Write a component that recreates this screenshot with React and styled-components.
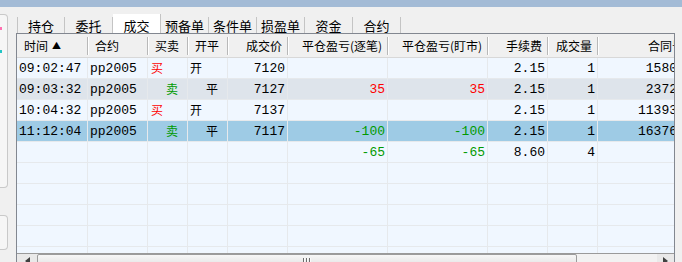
import React from "react";
import styled, { createGlobalStyle } from "styled-components";

const GlobalStyle = createGlobalStyle`
  html, body {
    margin: 0;
    padding: 0;
    background: #f0f0f0;
    overflow: hidden;
  }
  body {
    font-family: "Noto Sans CJK SC", sans-serif;
  }
`;

const Window = styled.div`
  width: 682px;
  height: 262px;
  overflow: hidden;
  display: flex;
  flex-direction: column;
  background: #f0f0f0;
`;

const TitleBand = styled.div`
  height: 7px;
  flex: none;
  background: #a3bbd6;
`;

const Body = styled.div`
  display: flex;
  flex: 1;
  min-height: 0;
`;

const SidePanel = styled.div`
  width: 8px;
  flex: none;
  padding-top: 7px;
  display: flex;
  flex-direction: column;
  gap: 27px;
`;

const SideBox = styled.div`
  height: ${(p) => p.$h}px;
  box-sizing: border-box;
  border: 1px solid #c9c9c9;
  border-left: none;
  border-radius: 0 4px 4px 0;
  background: #f6f6f6;
  display: flex;
  flex-direction: column;
  gap: 20px;
  padding-top: 12px;
`;

const Mark = styled.span`
  width: 2px;
  height: 3px;
  background: ${(p) => p.$color};
`;

const Main = styled.div`
  margin-left: 8px;
  width: 659px;
  flex: none;
  display: flex;
  flex-direction: column;
  padding-top: 7px;
`;

const TabStrip = styled.div`
  display: flex;
  align-items: flex-end;
  height: 19px;
  padding-left: 1px;
`;

const Tab = styled.div`
  width: 48px;
  height: ${(p) => (p.$active ? 19 : 16)}px;
  box-sizing: border-box;
  border-right: 1px solid #c4c4c4;
  border-left: ${(p) => (p.$first ? "1px solid #c4c4c4" : "none")};
  background: ${(p) => (p.$active ? "#ffffff" : "#f0f0f0")};
  font-size: 13px;
  line-height: 1;
  color: #000;
  display: flex;
  align-items: center;
  justify-content: center;
  padding-top: ${(p) => (p.$active ? 3 : 1)}px;
`;

const Frame = styled.div`
  border: 1px solid #828790;
  height: 240px;
  flex: none;
  display: flex;
  flex-direction: column;
  overflow: hidden;
  background: #f0f7ff;
`;

const Grid = styled.div`
  height: 219px;
  flex: none;
  overflow: hidden;
`;

const HeaderRow = styled.div`
  display: flex;
  height: 24px;
  box-sizing: border-box;
  border-bottom: 1px solid #d8d8d8;
  background: #f0f0f0;
`;

const HeaderCell = styled.div`
  width: ${(p) => p.$w}px;
  flex: none;
  box-sizing: border-box;
  position: relative;
  display: flex;
  align-items: center;
  justify-content: ${(p) => (p.$align === "right" ? "flex-end" : "flex-start")};
  padding: ${(p) => (p.$align === "right" ? `0 ${p.$pad ?? 6}px 0 0` : "0 0 0 7px")};
  font-size: 12px;
  line-height: 1;
  color: #000;
  white-space: nowrap;

  &::after {
    content: "";
    position: absolute;
    right: 0;
    top: 3px;
    bottom: 2px;
    width: 1px;
    background: #b8b8b8;
    box-shadow: 1px 0 0 #ffffff;
  }
`;

const SortArrow = styled.span`
  font-size: 9px;
  margin-left: 4px;
`;

const Row = styled.div`
  display: flex;
  height: 21px;
  box-sizing: border-box;
  border-bottom: 1px solid #e6e9ec;
  background: ${(p) =>
    p.$tone === "selected" ? "#9ecbe5" : p.$tone === "alt" ? "#dee4eb" : "#f0f7ff"};
`;

const Cell = styled.div`
  width: ${(p) => p.$w}px;
  flex: none;
  box-sizing: border-box;
  border-right: 1px solid #e6e9ec;
  display: flex;
  align-items: center;
  justify-content: ${(p) => (p.$align === "right" ? "flex-end" : "flex-start")};
  padding: ${(p) => (p.$align === "right" ? `0 ${p.$pad ?? 2}px 0 0` : `0 0 0 ${p.$indent || 2}px`)};
  font-family: "Liberation Mono", "Noto Sans CJK SC", monospace;
  font-size: 13px;
  line-height: 1;
  color: ${(p) => p.$color || "#000"};
  white-space: nowrap;
`;

const Cjk = styled.span`
  font-family: "Noto Sans CJK SC", sans-serif;
  font-size: 12px;
`;

const ScrollBar = styled.div`
  height: 17px;
  flex: none;
  display: flex;
  border-top: 1px solid #9a9a9a;
  background: #e9e9e9;
`;

const ArrowButton = styled.div`
  width: ${(p) => p.$w}px;
  flex: none;
  display: flex;
  align-items: flex-start;
  justify-content: center;
  padding-top: 3px;
  box-sizing: border-box;
`;

const Thumb = styled.div`
  width: 540px;
  flex: none;
  box-sizing: border-box;
  border: 1px solid #9c9c9c;
  border-radius: 2px;
  background: linear-gradient(#f7f7f7, #dcdcdc);
  display: flex;
  justify-content: center;
  padding-top: 3px;
  gap: 1px;
`;

const Grip = styled.span`
  width: 1px;
  height: 6px;
  background: #6d6d6d;
  border-right: 1px solid #fafafa;
`;

const Track = styled.div`
  flex: 1;
  background: #f2f2f2;
`;

// the last column runs past the frame's right edge, as in the original grid
const columns = [
  { key: "time", title: "时间", w: 71, align: "left", sort: true },
  { key: "code", title: "合约", w: 60, align: "left" },
  { key: "side", title: "买卖", w: 40, align: "left" },
  { key: "oc", title: "开平", w: 40, align: "left" },
  { key: "price", title: "成交价", w: 60, align: "right" },
  { key: "pl1", title: "平仓盈亏(逐笔)", w: 100, align: "right" },
  { key: "pl2", title: "平仓盈亏(盯市)", w: 100, align: "right" },
  { key: "fee", title: "手续费", w: 60, align: "right" },
  { key: "qty", title: "成交量", w: 50, align: "right" },
  { key: "id", title: "合同号", w: 86, align: "right", pad: 6, headPad: 0 },
];

const rows = [
  { time: "09:02:47", code: "pp2005", side: "买", oc: "开", price: "7120", pl1: "", pl2: "", fee: "2.15", qty: "1", id: "1580" },
  { time: "09:03:32", code: "pp2005", side: "卖", oc: "平", price: "7127", pl1: "35", pl2: "35", fee: "2.15", qty: "1", id: "2372", tone: "alt" },
  { time: "10:04:32", code: "pp2005", side: "买", oc: "开", price: "7137", pl1: "", pl2: "", fee: "2.15", qty: "1", id: "11393" },
  { time: "11:12:04", code: "pp2005", side: "卖", oc: "平", price: "7117", pl1: "-100", pl2: "-100", fee: "2.15", qty: "1", id: "16376", tone: "selected" },
  { time: "", code: "", side: "", oc: "", price: "", pl1: "-65", pl2: "-65", fee: "8.60", qty: "4", id: "" },
];

const tabs = ["持仓", "委托", "成交", "预备单", "条件单", "损盈单", "资金", "合约"];

const plColor = (v) => (!v ? "#000" : v.startsWith("-") ? "#009a00" : "#ff0000");

const renderCell = (col, row) => {
  const v = row[col.key];
  if (col.key === "side") {
    const sell = v === "卖";
    return (
      <Cell key={col.key} $w={col.w} $indent={sell ? 18 : 3} $color={sell ? "#009a00" : "#ff0000"}>
        <Cjk>{v}</Cjk>
      </Cell>
    );
  }
  if (col.key === "oc") {
    return (
      <Cell key={col.key} $w={col.w} $indent={v === "平" ? 18 : 2}>
        <Cjk>{v}</Cjk>
      </Cell>
    );
  }
  const color = col.key === "pl1" || col.key === "pl2" ? plColor(v) : "#000";
  return (
    <Cell key={col.key} $w={col.w} $align={col.align} $pad={col.pad} $color={color}>
      {v}
    </Cell>
  );
};

const emptyRows = Array.from({ length: 5 });

const Triangle = ({ dir }) => (
  <svg width="5" height="8" viewBox="0 0 5 8">
    <polygon points={dir === "left" ? "5,0 0,4 5,8" : "0,0 5,4 0,8"} fill="#404040" />
  </svg>
);

const App = () => {
  return (
    <>
      <GlobalStyle />
      <Window>
        <TitleBand />
        <Body>
          <SidePanel>
            <SideBox $h={174}>
              <Mark $color="#ff6fb0" />
              <Mark $color="#22c4c4" />
            </SideBox>
            <SideBox $h={35} />
          </SidePanel>
          <Main>
            <TabStrip>
              {tabs.map((t, i) => (
                <Tab key={t} $first={i === 0} $active={t === "成交"}>
                  {t}
                </Tab>
              ))}
            </TabStrip>
            <Frame>
              <Grid>
                <HeaderRow>
                  {columns.map((c) => (
                    <HeaderCell key={c.key} $w={c.w} $align={c.align} $pad={c.headPad}>
                      {c.title}
                      {c.sort && <SortArrow>▲</SortArrow>}
                    </HeaderCell>
                  ))}
                </HeaderRow>
                {rows.map((r, i) => (
                  <Row key={i} $tone={r.tone}>
                    {columns.map((c) => renderCell(c, r))}
                  </Row>
                ))}
                {emptyRows.map((_, i) => (
                  <Row key={`e${i}`}>
                    {columns.map((c) => (
                      <Cell key={c.key} $w={c.w} />
                    ))}
                  </Row>
                ))}
              </Grid>
              <ScrollBar>
                <ArrowButton $w={20}>
                  <Triangle dir="left" />
                </ArrowButton>
                <Thumb>
                  <Grip />
                  <Grip />
                  <Grip />
                </Thumb>
                <Track />
                <ArrowButton $w={17}>
                  <Triangle dir="right" />
                </ArrowButton>
              </ScrollBar>
            </Frame>
          </Main>
        </Body>
      </Window>
    </>
  );
};

export default App;
